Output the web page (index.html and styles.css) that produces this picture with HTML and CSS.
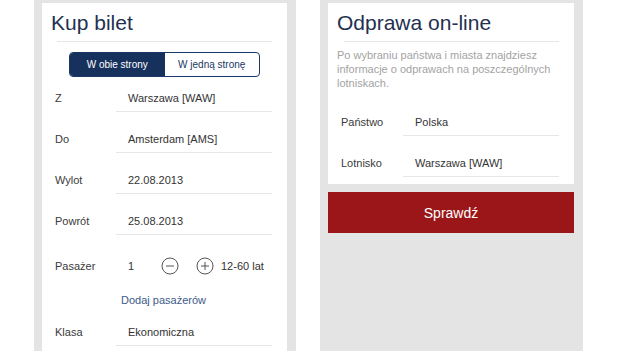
FILE: index.html
```html
<!DOCTYPE html>
<html lang="pl">
<head>
  <meta charset="UTF-8">
  <title>Kup bilet / Odprawa on-line</title>
  <link rel="stylesheet" href="styles.css">
</head>
<body>

  <div class="phone phone-left">
    <div class="card">
      <h1 class="title">Kup bilet</h1>
      <div class="divider"></div>

      <div class="segmented">
        <span class="seg active">W obie strony</span>
        <span class="seg">W jedną stronę</span>
      </div>

      <div class="row first">
        <span class="label">Z</span>
        <span class="field">Warszawa [WAW]</span>
      </div>
      <div class="row">
        <span class="label">Do</span>
        <span class="field">Amsterdam [AMS]</span>
      </div>
      <div class="row">
        <span class="label">Wylot</span>
        <span class="field">22.08.2013</span>
      </div>
      <div class="row">
        <span class="label">Powrót</span>
        <span class="field">25.08.2013</span>
      </div>

      <div class="passengers">
        <span class="label">Pasażer</span>
        <span class="count">1</span>
        <svg class="stepper" width="18" height="18" viewBox="0 0 18 18">
          <circle cx="9" cy="9" r="8" fill="none" stroke="#555" stroke-width="1"/>
          <line x1="5" y1="9" x2="13" y2="9" stroke="#555" stroke-width="1"/>
        </svg>
        <svg class="stepper" width="18" height="18" viewBox="0 0 18 18">
          <circle cx="9" cy="9" r="8" fill="none" stroke="#555" stroke-width="1"/>
          <line x1="5" y1="9" x2="13" y2="9" stroke="#555" stroke-width="1"/>
          <line x1="9" y1="5" x2="9" y2="13" stroke="#555" stroke-width="1"/>
        </svg>
        <span class="age">12-60 lat</span>
      </div>

      <div class="add-link">Dodaj pasażerów</div>

      <div class="row last">
        <span class="label">Klasa</span>
        <span class="field">Ekonomiczna</span>
      </div>
    </div>
  </div>

  <div class="phone phone-right">
    <div class="card card-short">
      <h1 class="title">Odprawa on-line</h1>
      <div class="divider wide"></div>

      <p class="info">Po wybraniu państwa i miasta znajdziesz informacje o odprawach na poszczególnych lotniskach.</p>

      <div class="row">
        <span class="label label-wide">Państwo</span>
        <span class="field">Polska</span>
      </div>
      <div class="row">
        <span class="label label-wide">Lotnisko</span>
        <span class="field">Warszawa [WAW]</span>
      </div>
    </div>

    <button class="check-btn">Sprawdź</button>
  </div>

</body>
</html>
```

FILE: styles.css
```css
html, body {
  margin: 0;
  height: 351px;
  overflow: hidden;
}

body {
  background-color: #ffffff;
  font-family: "Liberation Sans", Arial, sans-serif;
  color: #333;
  display: flex;
  gap: 24px;
  padding-left: 34px;
}

.phone {
  background-color: #e4e4e4;
  padding: 3px 9px 0 8px;
  height: 351px;
  box-sizing: border-box;
}

.phone-left {
  width: 262px;
}

.phone-right {
  width: 263px;
}

.card {
  background-color: #fff;
  padding: 0 15px 0 13px;
  height: 100%;
  box-sizing: border-box;
}

.card-short {
  height: auto;
  padding-bottom: 7px;
}

.title {
  margin: 0 0 0 -4px;
  padding-top: 7px;
  font-size: 21px;
  line-height: 26px;
  font-weight: normal;
  color: #23304f;
}

.divider {
  height: 1px;
  background-color: #e6e6e6;
  margin: 5px 0 0 2px;
}

.divider.wide {
  margin-left: 3px;
}

.segmented {
  display: flex;
  width: 191px;
  height: 25px;
  margin: 10px auto 0;
  border: 1px solid #1b3765;
  border-radius: 4px;
  box-sizing: border-box;
  overflow: hidden;
  position: relative;
  left: 1px;
}

.seg {
  flex: 1;
  display: flex;
  align-items: center;
  justify-content: center;
  font-size: 10px;
  color: #1b3765;
}

.seg.active {
  background-color: #17315d;
  color: #fff;
}

.row {
  display: flex;
  align-items: flex-end;
  font-size: 11px;
  line-height: 14px;
}

.label {
  width: 61px;
  padding-bottom: 7px;
  color: #3a3a3a;
}

.label-wide {
  width: 62px;
}

.field {
  flex: 1;
  height: 41px;
  box-sizing: border-box;
  padding: 0 0 6px 12px;
  border-bottom: 1px solid #e6e6e6;
  display: flex;
  align-items: flex-end;
}

.row.first .field {
  height: 35px;
}

.row.last .field {
  height: 39px;
}

.passengers {
  display: flex;
  align-items: center;
  height: 43px;
  box-sizing: border-box;
  padding-top: 18px;
  font-size: 11px;
  line-height: 14px;
}

.passengers .label {
  padding-bottom: 0;
}

.count {
  margin-left: 12px;
  width: 33px;
}

.stepper {
  margin-right: 17px;
}

.stepper + .stepper {
  margin-right: 7px;
}

.age {
  color: #333;
}

.add-link {
  padding-top: 15px;
  height: 29px;
  box-sizing: border-box;
  text-align: center;
  font-size: 11px;
  line-height: 14px;
  color: #3e5a8a;
}

.info {
  margin: 6px 0 5px -4px;
  width: 222px;
  font-size: 11px;
  line-height: 14px;
  color: #a3a3a3;
}

.check-btn {
  display: block;
  width: 100%;
  height: 41px;
  margin-top: 8px;
  border: none;
  background-color: #9a1619;
  color: #fff;
  font-family: "Liberation Sans", Arial, sans-serif;
  font-size: 14px;
}
```
